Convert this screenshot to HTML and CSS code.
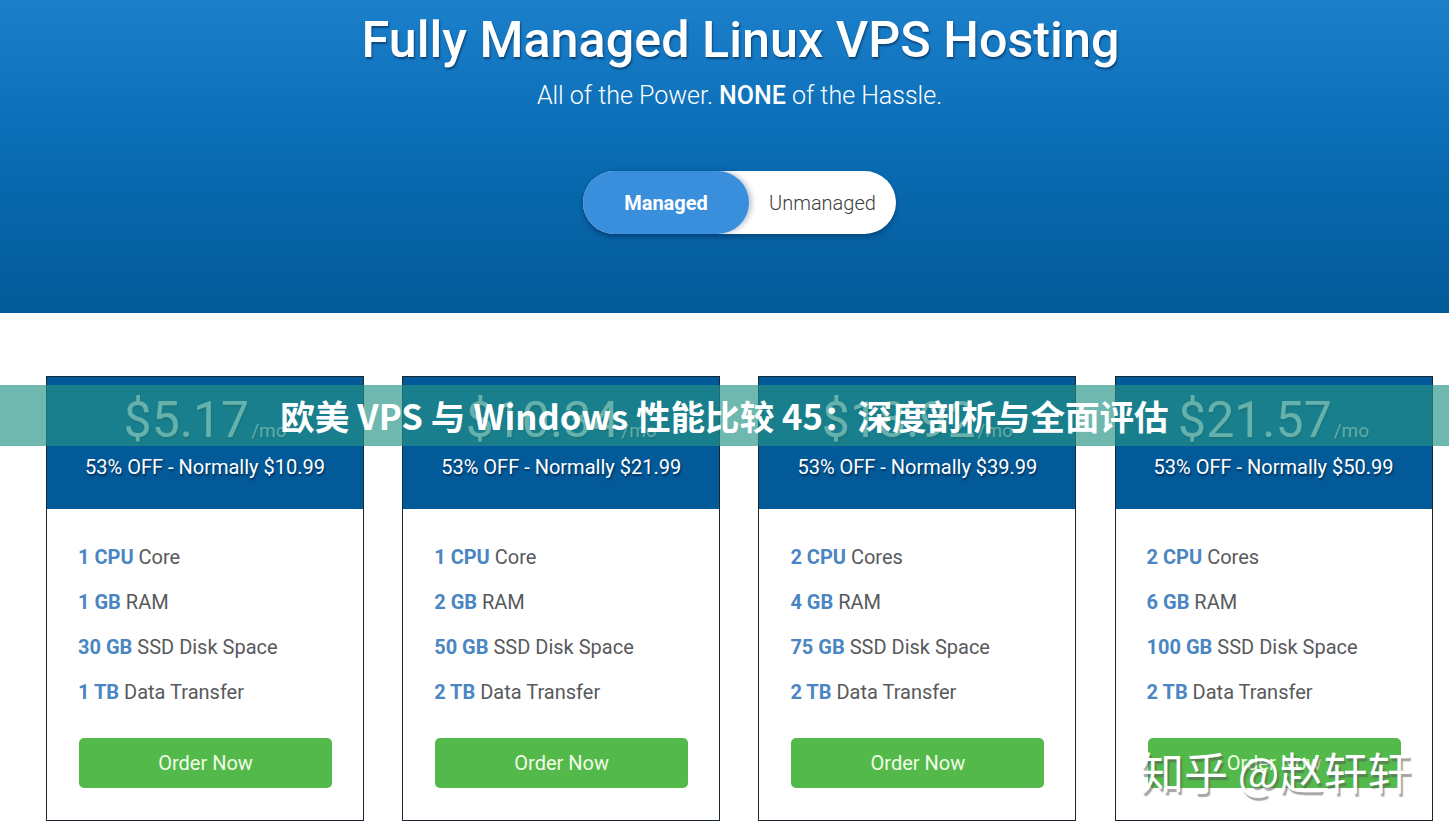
FILE: index.html
```html
<!DOCTYPE html>
<html lang="zh">
<head>
<meta charset="utf-8">
<title>Fully Managed Linux VPS Hosting</title>
<link rel="stylesheet" href="styles.css">
</head>
<body>
<header class="hero">
  <h1 class="hero-title">Fully Managed Linux VPS Hosting</h1>
  <p class="hero-sub">All of the Power. <strong>NONE</strong> of the Hassle.</p>
  <div class="toggle">
    <span class="toggle-opt active">Managed</span>
    <span class="toggle-opt">Unmanaged</span>
  </div>
</header>

<main class="plans">
  <div class="card">
    <div class="card-head">
      <div class="price">$5.17<span class="per">/mo</span></div>
      <div class="discount">53% OFF - Normally $10.99</div>
    </div>
    <ul class="features">
      <li><b>1 CPU</b> Core</li>
      <li><b>1 GB</b> RAM</li>
      <li><b>30 GB</b> SSD Disk Space</li>
      <li><b>1 TB</b> Data Transfer</li>
    </ul>
    <a class="order" href="#">Order Now</a>
  </div>
  <div class="card">
    <div class="card-head">
      <div class="price">$10.34<span class="per">/mo</span></div>
      <div class="discount">53% OFF - Normally $21.99</div>
    </div>
    <ul class="features">
      <li><b>1 CPU</b> Core</li>
      <li><b>2 GB</b> RAM</li>
      <li><b>50 GB</b> SSD Disk Space</li>
      <li><b>2 TB</b> Data Transfer</li>
    </ul>
    <a class="order" href="#">Order Now</a>
  </div>
  <div class="card">
    <div class="card-head">
      <div class="price">$18.92<span class="per">/mo</span></div>
      <div class="discount">53% OFF - Normally $39.99</div>
    </div>
    <ul class="features">
      <li><b>2 CPU</b> Cores</li>
      <li><b>4 GB</b> RAM</li>
      <li><b>75 GB</b> SSD Disk Space</li>
      <li><b>2 TB</b> Data Transfer</li>
    </ul>
    <a class="order" href="#">Order Now</a>
  </div>
  <div class="card">
    <div class="card-head">
      <div class="price">$21.57<span class="per">/mo</span></div>
      <div class="discount">53% OFF - Normally $50.99</div>
    </div>
    <ul class="features">
      <li><b>2 CPU</b> Cores</li>
      <li><b>6 GB</b> RAM</li>
      <li><b>100 GB</b> SSD Disk Space</li>
      <li><b>2 TB</b> Data Transfer</li>
    </ul>
    <a class="order" href="#">Order Now</a>
  </div>
</main>

<div class="banner">欧美 VPS 与 Windows 性能比较 45：深度剖析与全面评估</div>
<div class="watermark">知乎 @赵轩轩</div>
</body>
</html>
```
FILE: styles.css
```css
* { box-sizing: border-box; }
html, body { margin: 0; padding: 0; }
body {
  width: 1449px;
  height: 833px;
  overflow: hidden;
  background: #ffffff;
  font-family: Roboto, "Liberation Sans", sans-serif;
  position: relative;
}
.hero {
  height: 313px;
  background: linear-gradient(180deg, #1c7fcb 0%, #0a6db5 45%, #035a98 100%);
  display: flex;
  flex-direction: column;
  align-items: center;
  padding-top: 10px;
}
.hero-title {
  margin: 0 0 0 32px;
  font-size: 50.3px;
  line-height: 60px;
  font-weight: 500;
  color: #ffffff;
  text-shadow: 1px 2px 2px rgba(0, 30, 60, 0.55);
}
.hero-sub {
  margin: 11px 0 0 30px;
  font-size: 25px;
  line-height: 30px;
  font-weight: 300;
  color: #ffffff;
}
.hero-sub strong { font-weight: 500; }
.toggle {
  margin: 60px 0 0 30px;
  width: 313px;
  height: 63px;
  background: #ffffff;
  border-radius: 32px;
  display: flex;
  align-items: center;
  box-shadow: 0 3px 5px rgba(0, 20, 50, 0.35);
}
.toggle-opt {
  font-size: 20px;
  font-weight: 300;
  color: #3d3d3d;
  padding-left: 20px;
}
.toggle-opt.active {
  width: 166px;
  height: 63px;
  border-radius: 32px;
  background: #3a8fdc;
  color: #ffffff;
  font-size: 20px;
  font-weight: 700;
  display: flex;
  align-items: center;
  justify-content: center;
  padding-left: 0;
  box-shadow: 3px 0 5px rgba(0, 40, 80, 0.25);
}
.plans {
  margin-top: 63px;
  padding-left: 46px;
  display: grid;
  grid-template-columns: repeat(4, 318px);
  column-gap: 38.2px;
}
.card {
  border: 1px solid #1b2733;
  height: 445px;
  display: flex;
  flex-direction: column;
}
.card-head {
  background: #035a98;
  height: 132px;
  display: flex;
  flex-direction: column;
  align-items: center;
  padding-top: 13px;
}
.price {
  font-size: 50px;
  line-height: 60px;
  color: #e3ebf2;
  text-shadow: 1px 2px 2px rgba(0, 20, 50, 0.4);
}
.per {
  font-size: 19px;
  color: #cfdbe6;
  margin-left: 2px;
}
.discount {
  margin-top: -7px;
  font-size: 20px;
  line-height: 26px;
  color: #ffffff;
  text-shadow: 1px 2px 2px rgba(0, 20, 50, 0.6);
}
.features {
  list-style: none;
  margin: 0;
  padding: 26px 0 0 31px;
}
.features li {
  font-size: 20px;
  line-height: 45px;
  color: #58595b;
}
.features b {
  color: #4a86c2;
  font-weight: 700;
}
.order {
  margin: 23px 0 0 32px;
  width: 253px;
  height: 50px;
  border-radius: 5px;
  background: #53b94b;
  color: #f1fbe6;
  font-size: 20px;
  text-decoration: none;
  display: flex;
  align-items: center;
  justify-content: center;
}
.banner {
  position: absolute;
  left: 0;
  top: 385px;
  width: 1449px;
  height: 61px;
  background: rgba(36, 147, 135, 0.66);
  color: #ffffff;
  font-family: "Noto Sans CJK SC", "Noto Sans", sans-serif;
  font-weight: 700;
  font-size: 34.6px;
  line-height: 61px;
  text-align: center;
}
.watermark {
  position: absolute;
  left: 1140px;
  top: 745px;
  font-family: "Noto Sans CJK SC", sans-serif;
  font-size: 44px;
  line-height: 52px;
  color: #ffffff;
  text-shadow: 2px 3px 1px rgba(90, 90, 90, 0.55);
}
```
